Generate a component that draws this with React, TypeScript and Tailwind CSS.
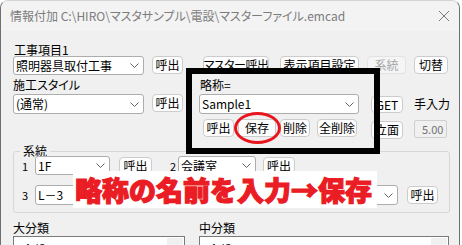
import React from 'react'

function Chevron() {
  return (
    <svg width="9" height="5" viewBox="0 0 9 5" className="shrink-0">
      <polyline points="0.5,0.5 4.5,4.5 8.5,0.5" fill="none" stroke="#606060" strokeWidth="1" />
    </svg>
  )
}

function Combo({ text, className = '' }: { text: string; className?: string }) {
  return (
    <div className={`flex shrink-0 items-center justify-between rounded-[3px] border border-[#adadad] bg-white pl-[2px] pr-[4px] ${className}`}>
      <span className="whitespace-nowrap leading-[14px]">{text}</span>
      <Chevron />
    </div>
  )
}

function Btn({ label, className = '', disabled }: { label: string; className?: string; disabled?: boolean }) {
  return (
    <div
      className={`flex shrink-0 items-center justify-center whitespace-nowrap rounded-[4px] border leading-[14px] ${
        disabled ? 'border-[#e3e3e3] bg-[#f5f5f5] text-[#a6a6a6]' : 'border-[#cccccc] bg-[#fdfdfd] text-black'
      } ${className}`}
    >
      {label}
    </div>
  )
}

export default function App() {
  return (
    <div className="h-[245px] w-[462px] overflow-hidden bg-white font-['Noto_Sans_CJK_JP',sans-serif] text-[12px] text-black [font-feature-settings:'palt']">
      <div className="relative h-[245px] w-[460px] overflow-hidden rounded-t-[8px] border-x border-t border-x-[#707070] border-t-[#d4d4d4] bg-[#f0f0f0]">
        {/* title bar */}
        <div className="flex h-[30px] items-center justify-between bg-[#f3f3f3] pl-[9px] pr-[9px]">
          <span className="text-[12px] text-[#7c7c7c]">情報付加 C:\HIRO\マスタサンプル\電設\マスターファイル.emcad</span>
          <svg width="12" height="12" viewBox="0 0 12 12">
            <path d="M1 1 L11 11 M11 1 L1 11" stroke="#7a7a7a" strokeWidth="1" fill="none" />
          </svg>
        </div>

        {/* 工事項目 */}
        <div className="flex flex-col pl-[12px] pt-[13px]">
          <div className="h-[12px] pl-[1px] leading-[12px]">工事項目1</div>
          <div className="flex items-start">
            <Combo text="照明器具取付工事" className="h-[19px] w-[131px]" />
            <Btn label="呼出" className="ml-[8px] h-[18px] w-[31px]" />
            <Btn label="マスター呼出" className="ml-[20px] h-[18px] w-[66px] tracking-[-0.5px]" />
            <Btn label="表示項目設定" className="ml-[11px] h-[18px] w-[79px]" />
            <Btn label="系統" disabled className="ml-[8px] h-[18px] w-[39px]" />
            <Btn label="切替" className="ml-[8px] h-[18px] w-[34px]" />
          </div>
        </div>

        {/* 施工スタイル / 略称 */}
        <div className="mt-[3px] flex items-start pl-[12px]">
          <div className="flex flex-col">
            <div className="h-[14px] leading-[14px]">施工スタイル</div>
            <div className="mt-[2px] flex items-start">
              <Combo text="(通常)" className="h-[20px] w-[131px]" />
              <Btn label="呼出" className="ml-[8px] h-[18px] w-[31px]" />
            </div>
          </div>
          <div className="ml-[16px] flex flex-col">
            <div className="h-[14px] pl-[1px] leading-[14px]">略称=</div>
            <Combo text="Sample1" className="mt-[2px] h-[20px] w-[160px]" />
            <div className="mt-[5px] flex pl-[4px]">
              <Btn label="呼出" className="h-[18px] w-[31px]" />
              <Btn label="保存" className="ml-[4px] h-[18px] w-[38px]" />
              <Btn label="削除" className="ml-[4px] h-[18px] w-[30px]" />
              <Btn label="全削除" className="ml-[7px] h-[18px] w-[40px]" />
            </div>
          </div>
          <div className="ml-[12px] flex flex-col">
            <Btn label="GET" className="mt-[18px] h-[17px] w-[32px]" />
            <Btn label="立面" className="mt-[8px] h-[18px] w-[32px]" />
          </div>
          <div className="ml-[11px] flex flex-col">
            <div className="mt-[19px] h-[14px] whitespace-nowrap leading-[14px]">手入力</div>
            <div className="mt-[9px] flex h-[18px] w-[33px] items-center rounded-[2px] border border-[#cfcfcf] bg-[#f0f0f0] pl-[7px] text-[11px] leading-[14px] text-[#707070]">
              5.00
            </div>
          </div>
        </div>

        {/* 系統 group */}
        <fieldset className="ml-[12px] mt-[7px] w-[437px] rounded-[3px] border border-[#d7d7d7] pb-[7px]">
          <legend className="ml-[6px] px-[3px] leading-[10px]">系統</legend>
          <div className="flex items-center pl-[8px]">
            <span className="w-[13px] text-[11px] leading-[14px]">1</span>
            <Combo text="1F" className="h-[19px] w-[75px]" />
            <Btn label="呼出" className="ml-[9px] h-[17px] w-[33px]" />
            <span className="ml-[18px] w-[8px] text-[11px] leading-[14px]">2</span>
            <Combo text="会議室" className="h-[19px] w-[78px]" />
            <Btn label="呼出" className="ml-[7px] h-[17px] w-[32px]" />
          </div>
          <div className="mt-[10px] flex items-center pl-[8px]">
            <span className="w-[13px] text-[11px] leading-[14px]">3</span>
            <Combo text="L－3" className="h-[20px] w-[363px]" />
            <Btn label="呼出" className="ml-[9px] h-[18px] w-[31px]" />
          </div>
        </fieldset>

        {/* 大分類 / 中分類 */}
        <div className="mt-[8px] flex pl-[12px]">
          <div className="flex flex-col">
            <div className="h-[14px] leading-[14px]">大分類</div>
            <div className="mt-[1px] flex h-[40px] w-[172px] justify-between border border-[#7a7a7a] bg-white">
              <span className="pl-[8px] pt-[6px] leading-[14px]">全般</span>
              <div className="mr-[1px] mt-[1px] w-[16px] bg-[#f0f0f0]" />
            </div>
          </div>
          <div className="ml-[14px] flex flex-col">
            <div className="h-[14px] leading-[14px]">中分類</div>
            <div className="mt-[1px] flex h-[40px] w-[250px] justify-between border border-[#7a7a7a] bg-white">
              <span className="pl-[8px] pt-[6px] leading-[14px]">全般</span>
              <div className="mr-[1px] mt-[1px] w-[16px] bg-[#f0f0f0]" />
            </div>
          </div>
        </div>

        {/* annotations */}
        <div className="absolute left-[185px] top-[67px] h-[86px] w-[194px] border-[6px] border-black" />
        <div className="absolute left-[233px] top-[111px] h-[32px] w-[47px] rounded-[50%] border-[3px] border-[#e8141e]" />
        <div className="absolute left-[72px] top-[170px] flex h-[37px] w-[304px] items-center bg-white pl-[2px]">
          <span className="whitespace-nowrap text-[27px] font-black leading-[30px] text-[#ea1c24] [-webkit-text-stroke:1.2px_#ea1c24] [font-feature-settings:normal]">
            略称の名前を入力→保存
          </span>
        </div>
      </div>
    </div>
  )
}
